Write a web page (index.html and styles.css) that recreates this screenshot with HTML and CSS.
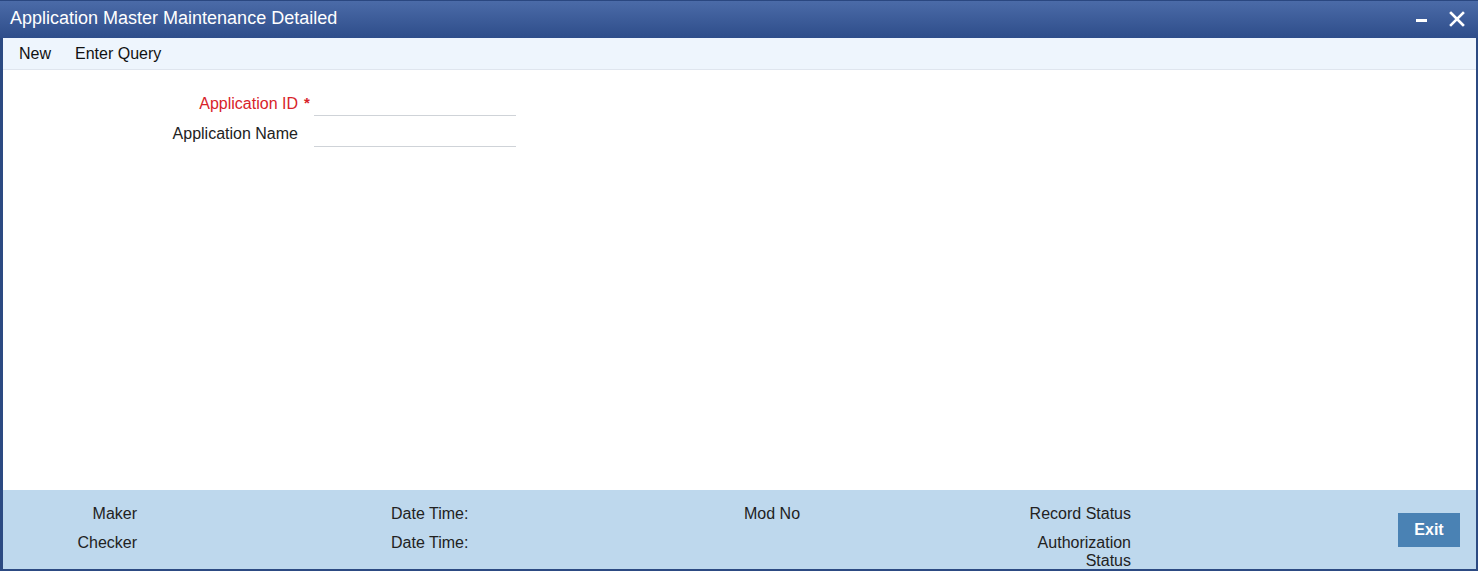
FILE: index.html
```html
<!DOCTYPE html>
<html>
<head>
<meta charset="utf-8">
<title>Application Master Maintenance Detailed</title>
<link rel="stylesheet" href="styles.css">
</head>
<body>
<div class="window">
  <div class="titlebar">
    <span class="title">Application Master Maintenance Detailed</span>
    <div class="winctl">
      <svg class="ico" width="14" height="14" viewBox="0 0 14 14"><rect x="1" y="7" width="11" height="3" fill="#fff"/></svg>
      <svg class="ico" width="16" height="16" viewBox="0 0 16 16"><path d="M2 2 L14 14 M14 2 L2 14" stroke="#fff" stroke-width="2.6" stroke-linecap="square"/></svg>
    </div>
  </div>
  <div class="frame">
    <div class="toolbar">
      <span class="tool">New</span>
      <span class="tool">Enter Query</span>
    </div>
    <div class="form">
      <div class="row">
        <label class="lbl req">Application ID</label>
        <span class="mark">*</span>
        <span class="field"></span>
      </div>
      <div class="row">
        <label class="lbl">Application Name</label>
        <span class="mark"></span>
        <span class="field"></span>
      </div>
    </div>
    <div class="audit">
      <div class="col c1"><span>Maker</span><span>Checker</span></div>
      <div class="col c2"><span>Date Time:</span><span>Date Time:</span></div>
      <div class="col c3"><span>Mod No</span></div>
      <div class="col c4"><span>Record Status</span><span>Authorization Status</span></div>
      <button class="exit">Exit</button>
    </div>
  </div>
</div>
</body>
</html>
```
FILE: styles.css
```css
html, body {
  margin: 0;
  padding: 0;
  background: #fff;
}
body {
  font-family: "Liberation Sans", Arial, sans-serif;
  font-size: 16px;
  color: #222;
}
.window {
  width: 1478px;
  height: 571px;
  display: flex;
  flex-direction: column;
}
.titlebar {
  height: 38px;
  flex: none;
  background: linear-gradient(#4b6ba8, #2e4d8a);
  display: flex;
  align-items: center;
  justify-content: space-between;
  padding: 0 13px 0 10px;
  box-sizing: border-box;
  border-top: 1px solid #2a4780;
}
.title {
  color: #fff;
  font-size: 18px;
  margin-top: -3px;
}
.winctl {
  display: flex;
  align-items: center;
  gap: 20px;
  margin-top: -2px;
}
.ico { display: block; }
.frame {
  flex: 1;
  display: flex;
  flex-direction: column;
  border-left: 3px solid #2c4a82;
  border-right: 2px solid #2c4a82;
  border-bottom: 2px solid #2c4a82;
  min-height: 0;
}
.toolbar {
  height: 31px;
  flex: none;
  background: #eef5fd;
  border-bottom: 1px solid #dfe5ee;
  display: flex;
  align-items: center;
  gap: 24px;
  padding-left: 16px;
}
.tool { color: #111; }
.form {
  flex: 1;
  padding-top: 17px;
  display: flex;
  flex-direction: column;
  gap: 2px;
}
.row {
  display: flex;
  align-items: center;
  height: 29px;
}
.lbl {
  width: 295px;
  text-align: right;
  padding-top: 2px;
}
.lbl.req { color: #d8232a; padding-top: 4px; }
.mark {
  width: 16px;
  color: #d8232a;
  text-align: center;
  font-weight: bold;
  font-size: 15px;
  padding-left: 2px;
  padding-top: 2px;
  box-sizing: border-box;
}
.field {
  width: 202px;
  height: 29px;
  box-sizing: border-box;
  border-bottom: 1px solid #cfd3d8;
}
.audit {
  height: 79px;
  flex: none;
  background: #bed8ed;
  display: flex;
  align-items: flex-start;
  padding-top: 15px;
  box-sizing: border-box;
}
.col {
  display: flex;
  flex-direction: column;
  gap: 11px;
  line-height: 18px;
  color: #222;
}
.c1 { width: 134px; text-align: right; margin-right: 254px; }
.c2 { width: 353px; }
.c3 { width: 267px; }
.c4 { width: 120px; text-align: right; }
.exit {
  margin-left: 267px;
  margin-top: 8px;
  width: 62px;
  height: 34px;
  border: 0;
  background: #4a82b4;
  color: #fff;
  font-family: "Liberation Sans", Arial, sans-serif;
  font-weight: bold;
  font-size: 16px;
  padding: 0;
}
```
